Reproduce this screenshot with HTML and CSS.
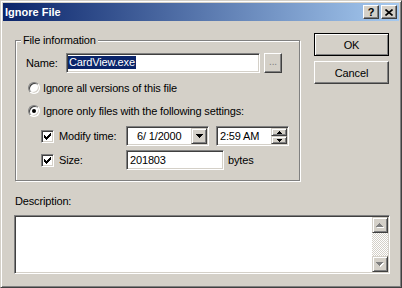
FILE: index.html
```html
<!DOCTYPE html>
<html>
<head>
<meta charset="utf-8">
<title>Ignore File</title>
<link rel="stylesheet" href="styles.css">
</head>
<body>
<div class="window">
  <div class="titlebar">
    <span class="title">Ignore File</span>
    <div class="tbuttons">
      <span class="tbtn help">?</span>
      <span class="tbtn"><svg width="8" height="7" viewBox="0 0 8 7"><path d="M0.5 0.5L7.5 6.5M7.5 0.5L0.5 6.5" stroke="#000" stroke-width="1.6" fill="none"/></svg></span>
    </div>
  </div>
  <div class="client">
    <div class="top">
      <div class="group">
        <span class="legend">File information</span>
        <div class="name-row">
          <span class="name-lbl">Name:</span>
          <div class="edit name-edit"><span class="sel">CardView.exe</span></div>
          <div class="btn small-btn">...</div>
        </div>
        <div class="radio-row first"><span class="radio"></span><span>Ignore all versions of this file</span></div>
        <div class="radio-row"><span class="radio checked"></span><span>Ignore only files with the following settings:</span></div>
        <div class="opt-row first">
          <span class="check"><svg width="7" height="7" viewBox="0 0 7 7" shape-rendering="crispEdges"><path d="M6 0h1v3h-1v1h-1v1h-1v1h-1v1h-1v-1h-1v-1h-1v-3h1v1h1v1h1v-1h1v-1h1z" fill="#000"/></svg></span>
          <span class="opt-lbl">Modify time:</span>
          <div class="edit date">
            <span class="date-text">6/ 1/2000</span>
            <span class="dropbtn"><svg width="7" height="4" viewBox="0 0 7 4" shape-rendering="crispEdges"><path d="M0 0h7v1h-1v1h-1v1h-1v1h-1v-1h-1v-1h-1v-1h-1z" fill="#000"/></svg></span>
          </div>
          <div class="edit time">
            <span class="time-text">2:59 AM</span>
            <span class="spin">
              <span class="spinbtn"><svg width="5" height="3" viewBox="0 0 5 3" shape-rendering="crispEdges"><path d="M2 0h1v1h1v1h1v1h-5v-1h1v-1h1z" fill="#000"/></svg></span>
              <span class="spinbtn"><svg width="5" height="3" viewBox="0 0 5 3" shape-rendering="crispEdges"><path d="M0 0h5v1h-1v1h-1v1h-1v-1h-1v-1h-1z" fill="#000"/></svg></span>
            </span>
          </div>
        </div>
        <div class="opt-row">
          <span class="check"><svg width="7" height="7" viewBox="0 0 7 7" shape-rendering="crispEdges"><path d="M6 0h1v3h-1v1h-1v1h-1v1h-1v1h-1v-1h-1v-1h-1v-3h1v1h1v1h1v-1h1v-1h1z" fill="#000"/></svg></span>
          <span class="opt-lbl">Size:</span>
          <div class="edit size-edit">201803</div>
          <span class="bytes">bytes</span>
        </div>
      </div>
      <div class="buttons">
        <div class="btn default">OK</div>
        <div class="btn">Cancel</div>
      </div>
    </div>
    <div class="desc-label">Description:</div>
    <div class="edit desc">
      <div class="vscroll">
        <span class="sbtn"><svg width="8" height="5" viewBox="0 0 8 5" shape-rendering="crispEdges"><path d="M1 4h7v1h-7z" fill="#fff"/><path d="M3 0h1v1h1v1h1v1h1v1h-7v-1h1v-1h1v-1h1z" fill="#808080"/></svg></span>
        <span class="track"></span>
        <span class="sbtn"><svg width="8" height="5" viewBox="0 0 8 5" shape-rendering="crispEdges"><path d="M1 1h7v1h-1v1h-1v1h-1v1h-1v-1h-1v-1h-1z" fill="#fff"/><path d="M0 0h7v1h-1v1h-1v1h-1v1h-1v-1h-1v-1h-1v-1h-1z" fill="#808080"/></svg></span>
      </div>
    </div>
  </div>
</div>
</body>
</html>
```
FILE: styles.css
```css
* { box-sizing: border-box; }
html, body { margin: 0; padding: 0; background: #D4D0C8; }
body {
  font-family: "Liberation Sans", Arial, sans-serif;
  font-size: 11px;
  letter-spacing: -0.15px;
  color: #000;
}

.window {
  width: 402px;
  height: 288px;
  border: 1px solid;
  border-color: #D4D0C8 #404040 #404040 #D4D0C8;
  box-shadow: inset 1px 1px #fff, inset -1px -1px #808080;
  padding: 2px;
  background: #D4D0C8;
  display: flex;
  flex-direction: column;
}

.titlebar {
  height: 18px;
  flex: none;
  background: linear-gradient(to right, #0A246A, #A6CAF0);
  display: flex;
  align-items: center;
  justify-content: space-between;
  padding: 0 2px 0 2px;
}
.title { color: #fff; font-weight: bold; font-size: 11px; letter-spacing: 0; }
.tbuttons { display: flex; gap: 2px; }
.tbtn {
  width: 16px;
  height: 14px;
  background: #D4D0C8;
  border: 1px solid;
  border-color: #fff #404040 #404040 #fff;
  box-shadow: inset -1px -1px #808080;
  display: flex;
  align-items: center;
  justify-content: center;
  font-weight: bold;
  font-size: 11px;
  line-height: 12px;
}

.client { flex: 1; padding: 0 10px 0 12px; }
.top { display: flex; align-items: flex-start; }

.group {
  position: relative;
  width: 285px;
  height: 141px;
  margin-top: 19px;
  border: 1px solid #808080;
  box-shadow: 1px 1px #fff, inset 1px 1px #fff;
}
.legend {
  position: absolute;
  top: -7px;
  left: 5px;
  padding: 0 2px;
  line-height: 13px;
  background: #D4D0C8;
}

.buttons {
  margin: 12px 0 0 14px;
  display: flex;
  flex-direction: column;
  gap: 5px;
}

.edit {
  background: #fff;
  border: 1px solid;
  border-color: #808080 #fff #fff #808080;
  box-shadow: inset 1px 1px #404040, inset -1px -1px #D4D0C8;
}

.btn {
  width: 75px;
  height: 23px;
  background: #D4D0C8;
  border: 1px solid;
  border-color: #fff #404040 #404040 #fff;
  box-shadow: inset -1px -1px #808080;
  display: flex;
  align-items: center;
  justify-content: center;
}
.btn.default {
  border-color: #000;
  box-shadow: inset 1px 1px #fff, inset -1px -1px #808080;
}

.name-row {
  display: flex;
  align-items: center;
  height: 20px;
  margin: 12px 0 0 10px;
}
.name-lbl { width: 40px; }
.name-edit {
  width: 194px;
  height: 20px;
  padding: 2px 0 0 1px;
}
.sel {
  display: inline-block;
  background: #0A246A;
  color: #fff;
  height: 13px;
  line-height: 13px;
  padding: 0 1px;
}
.small-btn {
  width: 18px;
  height: 20px;
  margin-left: 4px;
  font-size: 10px;
  color: #808080;
  align-items: flex-end;
  padding-bottom: 5px;
}

.radio-row {
  display: flex;
  align-items: center;
  height: 15px;
  margin: 8px 0 0 12px;
}
.radio-row.first { margin-top: 7px; }
.radio {
  width: 12px;
  height: 12px;
  border-radius: 50%;
  background: #fff;
  border: 1px solid;
  border-color: #808080 #fff #fff #808080;
  box-shadow: inset 1px 1px #404040, inset -1px -1px #D4D0C8;
  margin-right: 3px;
  display: flex;
  align-items: center;
  justify-content: center;
}
.radio.checked::after {
  content: "";
  width: 4px;
  height: 4px;
  border-radius: 50%;
  background: #000;
}

.opt-row {
  display: flex;
  align-items: center;
  height: 20px;
  margin: 4px 0 0 25px;
}
.opt-row.first { margin-top: 8px; }
.check {
  width: 13px;
  height: 13px;
  background: #fff;
  border: 1px solid;
  border-color: #808080 #fff #fff #808080;
  box-shadow: inset 1px 1px #404040, inset -1px -1px #D4D0C8;
  margin-right: 5px;
  display: flex;
  align-items: center;
  justify-content: center;
}
.opt-lbl { width: 67px; }

.date {
  width: 83px;
  height: 20px;
  display: flex;
  align-items: center;
  justify-content: space-between;
  padding: 1px 1px 1px 10px;
}
.dropbtn, .spinbtn {
  background: #D4D0C8;
  border: 1px solid;
  border-color: #D4D0C8 #404040 #404040 #D4D0C8;
  box-shadow: inset 1px 1px #fff, inset -1px -1px #808080;
  display: flex;
  align-items: center;
  justify-content: center;
}
.dropbtn { width: 16px; height: 16px; }
.time {
  width: 73px;
  height: 20px;
  margin-left: 7px;
  display: flex;
  align-items: center;
  justify-content: space-between;
  padding: 1px 1px 1px 3px;
}
.spin { display: flex; flex-direction: column; width: 16px; height: 16px; }
.spinbtn { height: 8px; width: 16px; }

.size-edit {
  width: 98px;
  height: 20px;
  padding: 3px 0 0 3px;
  line-height: 13px;
}
.bytes { margin-left: 4px; }

.desc-label {
  margin-top: 14px;
  line-height: 13px;
}
.desc {
  width: 376px;
  height: 59px;
  margin: 7px 0 0 -1px;
  display: flex;
  justify-content: flex-end;
  padding: 1px;
}
.vscroll {
  width: 16px;
  height: 100%;
  display: flex;
  flex-direction: column;
  background: repeating-conic-gradient(#D4D0C8 0 25%, #fff 0 50%) 0 0 / 2px 2px;
}
.sbtn {
  width: 16px;
  height: 16px;
  flex: none;
  background: #D4D0C8;
  border: 1px solid;
  border-color: #D4D0C8 #404040 #404040 #D4D0C8;
  box-shadow: inset 1px 1px #fff, inset -1px -1px #808080;
  display: flex;
  align-items: center;
  justify-content: center;
}
.track { flex: 1; }
```
